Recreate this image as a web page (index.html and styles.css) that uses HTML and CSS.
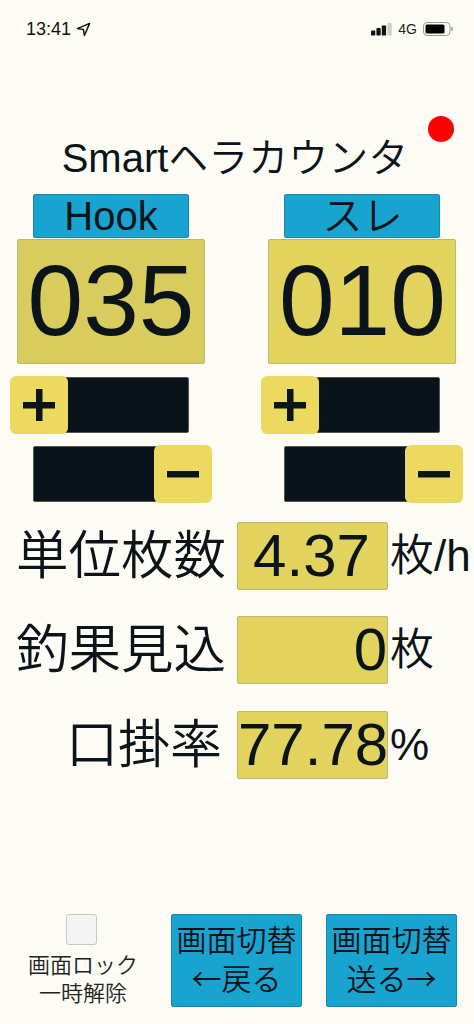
FILE: index.html
```html
<!DOCTYPE html>
<html lang="ja">
<head>
<meta charset="utf-8">
<title>Smartヘラカウンタ</title>
<link rel="stylesheet" href="styles.css">
</head>
<body>
<div class="screen">
  <div class="status">
    <div class="status-left">
      <span class="time">13:41</span>
      <svg class="loc" width="15" height="15" viewBox="0 0 15 15"><path d="M13.6 1.400 1.400 6.600l6 .9 1 6z" fill="none" stroke="#111" stroke-width="1.500" stroke-linejoin="round"/></svg>
    </div>
    <div class="status-right">
      <svg width="21" height="13" viewBox="0 0 21 13"><rect x="0" y="7.500" width="4.300" height="5" rx=".8" fill="#111"/><rect x="5.400" y="5" width="4.300" height="7.500" rx=".8" fill="#111"/><rect x="10.800" y="2.500" width="4.300" height="10" rx=".8" fill="#111"/><rect x="16.400" y="0" width="4.300" height="12.500" rx=".8" fill="#ccc"/></svg>
      <span class="net">4G</span>
      <svg width="30" height="14" viewBox="0 0 30 14"><rect x=".5" y=".5" width="26.500" height="13" rx="3.500" fill="none" stroke="#999"/><rect x="2.500" y="2.500" width="19" height="9" rx="1.500" fill="#000"/><rect x="28.200" y="5" width="1.500" height="4" rx=".7" fill="#999"/></svg>
    </div>
  </div>

  <div class="title-wrap">
    <h1 class="title">Smartヘラカウンタ</h1>
    <span class="dot"></span>
  </div>

  <div class="counters">
    <section class="counter">
      <button class="tag">Hook</button>
      <div class="count count-active">035</div>
      <div class="slider">
        <span class="thumb thumb-left"><svg width="34" height="34" viewBox="0 0 34 34"><path d="M1 14h32v6.500H1zM14 1h6.500v32H14z" fill="#0a1419"/></svg></span>
      </div>
      <div class="slider">
        <span class="thumb thumb-right"><svg width="34" height="8" viewBox="0 0 34 8"><path d="M1 1h32v6.500H1z" fill="#0a1419"/></svg></span>
      </div>
    </section>
    <section class="counter">
      <button class="tag">スレ</button>
      <div class="count">010</div>
      <div class="slider">
        <span class="thumb thumb-left"><svg width="34" height="34" viewBox="0 0 34 34"><path d="M1 14h32v6.500H1zM14 1h6.500v32H14z" fill="#0a1419"/></svg></span>
      </div>
      <div class="slider">
        <span class="thumb thumb-right"><svg width="34" height="8" viewBox="0 0 34 8"><path d="M1 1h32v6.500H1z" fill="#0a1419"/></svg></span>
      </div>
    </section>
  </div>

  <div class="stats">
    <div class="stat">
      <span class="stat-label">単位枚数</span>
      <span class="stat-value stat-center">4.37</span>
      <span class="stat-unit">枚/h</span>
    </div>
    <div class="stat">
      <span class="stat-label">釣果見込</span>
      <span class="stat-value">0</span>
      <span class="stat-unit">枚</span>
    </div>
    <div class="stat">
      <span class="stat-label stat-label-short">口掛率</span>
      <span class="stat-value">77.78</span>
      <span class="stat-unit">%</span>
    </div>
  </div>

  <div class="footer">
    <label class="lock">
      <span class="check"></span>
      <span class="lock-text">画面ロック<br>一時解除</span>
    </label>
    <button class="nav">画面切替<br><span class="arrow">←</span>戻る</button>
    <button class="nav">画面切替<br>送る<span class="arrow">→</span></button>
  </div>
</div>
</body>
</html>
```
FILE: styles.css
```css
* { box-sizing: border-box; }
html, body { margin: 0; padding: 0; }
body {
  background: #fcfcf4;
  color: #0a1419;
  font-family: "Liberation Sans", "Noto Sans CJK JP", sans-serif;
  font-weight: 350;
}
.screen {
  width: 474px;
  height: 1024px;
  display: flex;
  flex-direction: column;
  overflow: hidden;
}
.status {
  height: 58px;
  display: flex;
  justify-content: space-between;
  align-items: center;
  padding: 0 21px 0 26px;
  flex: none;
}
.status-left { display: flex; align-items: center; gap: 5px; }
.time { font-size: 18px; line-height: 20px; color: #111; }
.status-right { display: flex; align-items: center; gap: 6px; }
.net { font-size: 14px; line-height: 16px; color: #222; }

.title-wrap {
  position: relative;
  height: 136px;
  flex: none;
  display: flex;
  align-items: flex-end;
  justify-content: center;
}
.title {
  margin: 0 4px 13px 0;
  font-size: 40px;
  line-height: 46px;
  font-weight: 350;
  white-space: nowrap;
}
.dot {
  position: absolute;
  left: 428px;
  top: 58px;
  width: 26px;
  height: 26px;
  border-radius: 50%;
  background: #ff0000;
}

.counters {
  display: grid;
  grid-template-columns: 188px 188px;
  column-gap: 63.400px;
  padding-left: 17px;
  flex: none;
}
.counter { display: flex; flex-direction: column; align-items: center; }
.tag {
  width: 156px;
  height: 44px;
  margin: 0 0 1px;
  padding: 0;
  background: #19a3cf;
  border: 1px solid #1589b0;
  border-radius: 2px;
  font: inherit;
  font-size: 40px;
  line-height: 42px;
  color: inherit;
}
.count {
  width: 188px;
  height: 125px;
  background: #e2d35f;
  border: 1px solid #bfb76f;
  border-radius: 2px;
  font-size: 100px;
  line-height: 121px;
  text-align: center;
  margin-bottom: 13px;
}
.count-active { background: #d9cc5e; }
.slider {
  position: relative;
  width: 156px;
  height: 56px;
  background: #08131a;
  border: 1px solid #55584f;
  border-radius: 2px;
  margin-bottom: 13px;
}
.thumb {
  position: absolute;
  top: -2px;
  width: 58px;
  height: 58px;
  background: #ebd960;
  border-radius: 6px;
  display: flex;
  align-items: center;
  justify-content: center;
}
.thumb-left { left: -24px; }
.thumb-right { right: -24px; }

.stats {
  display: flex;
  flex-direction: column;
  gap: 26px;
  margin-top: 7px;
  padding-left: 16px;
  flex: none;
}
.stat { display: flex; align-items: center; height: 68px; }
.stat:last-child { margin-top: 1px; }
.stat-label {
  width: 221px;
  font-size: 52.500px;
  line-height: 60px;
  white-space: nowrap;
}
.stat-label-short { text-align: right; padding-right: 15px; font-size: 52px; }
.stat-value {
  width: 151px;
  height: 68px;
  background: #e2d35f;
  border: 1px solid #bfb76f;
  border-radius: 2px;
  font-size: 60px;
  line-height: 66px;
  text-align: right;
  white-space: nowrap;
}
.stat-center { text-align: center; padding-right: 2px; }
.stat-unit {
  margin-left: 2px;
  font-size: 44px;
  line-height: 50px;
  white-space: nowrap;
}

.footer {
  margin-top: auto;
  margin-bottom: 17px;
  display: flex;
  align-items: flex-start;
  padding-left: 171px;
  gap: 24px;
  position: relative;
  flex: none;
}
.lock {
  position: absolute;
  left: 18px;
  top: 0;
  width: 130px;
  display: flex;
  flex-direction: column;
  align-items: center;
}
.check {
  width: 31px;
  height: 31px;
  background: #f4f4f4;
  border: 1px solid #c8c8c4;
  border-radius: 3px;
  margin: 0 3px 7px 0;
}
.lock-text {
  font-size: 22px;
  line-height: 28px;
  text-align: center;
  white-space: nowrap;
  color: #222;
}
.nav {
  width: 131px;
  height: 93px;
  padding: 0;
  background: #19a3cf;
  border: 1px solid #1589b0;
  border-radius: 2px;
  font: inherit;
  font-size: 30px;
  line-height: 36px;
  color: inherit;
  white-space: nowrap;
}
.arrow { font-family: "Noto Sans CJK JP", sans-serif; }
```
